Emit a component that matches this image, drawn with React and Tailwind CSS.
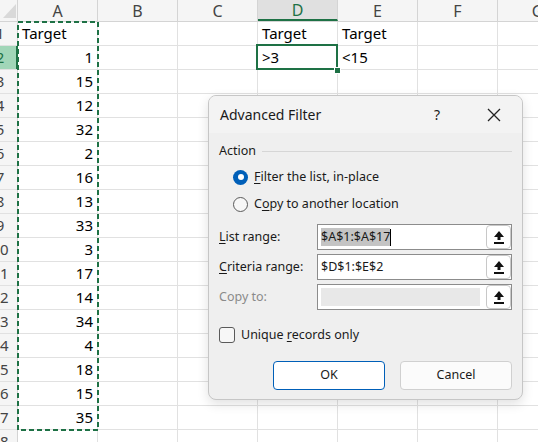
import React from "react";

const cols = ["A", "B", "C", "D", "E", "F", "G"];
const values = [1, 15, 12, 32, 2, 16, 13, 33, 3, 17, 14, 34, 4, 18, 15, 35];

function UploadIcon() {
  return (
    <svg width="12" height="15" viewBox="0 0 12 15">
      <path d="M6 1 L11 7 L7.5 7 L7.5 10 L4.5 10 L4.5 7 L1 7 Z" fill="#111" />
      <rect x="1" y="12" width="10" height="2" fill="#111" />
    </svg>
  );
}

function RangeField({ label, accel, rest, value, selected, disabled }) {
  return (
    <div className="flex items-center h-[26px]">
      <div className={`w-[98px] text-[12.5px] ${disabled ? "text-[#8a8a8a]" : "text-[#1a1a1a]"}`}>
        {accel && <span className="underline underline-offset-2">{accel}</span>}
        {rest}
      </div>
      <div className="flex-1 h-[26px] flex items-center border border-[#8c8c8c] bg-white">
        {disabled ? (
          <div className="flex-1 h-[18px] ml-[3px] mr-[6px] bg-[#e8e8e8]" />
        ) : (
          <div className="flex-1 pl-[3px] text-[12.5px] text-[#1a1a1a] flex items-center">
            <span className={selected ? "bg-[#c4c4c4]" : ""}>{value}</span>
            {selected && <span className="w-px h-[17px] bg-black" />}
          </div>
        )}
        <div className="w-[25px] h-[24px] flex items-center justify-center bg-white border border-[#c8c8c8] rounded-[4px]">
          <UploadIcon />
        </div>
      </div>
    </div>
  );
}

export default function App() {
  return (
    <div className="relative w-[538px] h-[442px] overflow-hidden bg-white" style={{ fontFamily: "'Noto Sans', 'Open Sans', sans-serif" }}>
      {/* Column headers */}
      <div className="flex h-[22px] border-b border-[#d4d4d4] bg-[#f5f5f5]">
        <div className="w-[18px] shrink-0 border-r border-[#d4d4d4] relative">
          <svg width="18" height="21" className="absolute left-0 top-0">
            <path d="M3 18 L16 18 L16 4 Z" fill="#d9d9d9" />
          </svg>
        </div>
        {cols.map((c) => (
          <div
            key={c}
            className={`w-[80px] shrink-0 flex items-center justify-center text-[16px] border-r border-[#d4d4d4] ${
              c === "D" ? "bg-[#e0e0e0] text-[#1e7145] border-b-2 border-b-[#1e7145]" : "text-[#444]"
            }`}
          >
            {c}
          </div>
        ))}
      </div>

      {/* Rows */}
      {Array.from({ length: 18 }).map((_, i) => {
        const r = i + 1;
        const sel = r === 2;
        return (
          <div key={r} className="flex h-[24px] border-b border-[#e1e1e1]">
            <div
              className={`w-[18px] shrink-0 overflow-hidden flex items-center text-[15px] border-r ${
                sel ? "bg-[#a1d6b8] text-[#1e7145] border-r-2 border-r-[#1e7145]" : "bg-[#f5f5f5] text-[#444] border-[#d4d4d4]"
              }`}
            >
              <div className="w-[34px] shrink-0 -ml-[17px] text-center">{r}</div>
            </div>
            {cols.map((c) => {
              let txt = "";
              let right = false;
              if (c === "A") {
                if (r === 1) txt = "Target";
                else if (r <= 17) {
                  txt = values[r - 2];
                  right = true;
                }
              }
              if (c === "D" && r === 1) txt = "Target";
              if (c === "E" && r === 1) txt = "Target";
              if (c === "D" && r === 2) txt = ">3";
              if (c === "E" && r === 2) txt = "<15";
              return (
                <div
                  key={c}
                  className={`w-[80px] shrink-0 flex items-center text-[15px] text-black border-r border-[#e1e1e1] px-[4px] ${
                    right ? "justify-end" : ""
                  }`}
                >
                  {txt}
                </div>
              );
            })}
          </div>
        );
      })}

      {/* Copy marquee around A1:A17 */}
      <svg className="absolute left-[17px] top-[21px]" width="82" height="410">
        <rect x="1" y="1" width="80" height="408" fill="none" stroke="#1e7145" strokeWidth="2" strokeDasharray="5 3" />
      </svg>

      {/* Active cell D2 */}
      <div className="absolute left-[256px] top-[44px] w-[82px] h-[26px] border-2 border-[#1e7145]" />
      <div className="absolute left-[334px] top-[67px] w-[5px] h-[5px] bg-[#1e7145] border border-white box-content" />

      {/* Advanced Filter dialog */}
      <div className="absolute left-[208px] top-[95px] w-[315px] h-[305px] rounded-[8px] border border-[#c6c6c6] bg-[#efefef] shadow-[0_4px_12px_rgba(0,0,0,0.12)] overflow-hidden text-[#1a1a1a]">
        <div className="h-[37px] bg-[#f3f3f3] flex items-center pl-[11px] pr-[21px]">
          <span className="text-[14px]">Advanced Filter</span>
          <span className="ml-auto text-[14px]">?</span>
          <svg className="ml-[47px]" width="14" height="14" viewBox="0 0 14 14">
            <path d="M1 1 L13 13 M13 1 L1 13" stroke="#222" strokeWidth="1.3" />
          </svg>
        </div>

        <div className="px-[10px]">
          <div className="mt-[9px] h-[18px] flex items-center gap-[6px]">
            <span className="text-[12.5px]">Action</span>
            <div className="flex-1 h-px bg-[#d6d6d6]" />
          </div>

          <div className="mt-[6px] h-[22px] flex items-center pl-[14px] gap-[6px]">
            <div className="w-[15px] h-[15px] rounded-full bg-[#005fb8] flex items-center justify-center">
              <div className="w-[6px] h-[6px] rounded-full bg-white" />
            </div>
            <span className="text-[12.5px]">
              <span className="underline underline-offset-2">F</span>ilter the list, in-place
            </span>
          </div>

          <div className="mt-[5px] h-[22px] flex items-center pl-[14px] gap-[6px]">
            <div className="w-[15px] h-[15px] rounded-full border border-[#5a5a5a] bg-[#f7f7f7]" />
            <span className="text-[12.5px]">
              C<span className="underline underline-offset-2">o</span>py to another location
            </span>
          </div>

          <div className="mt-[9px]">
            <RangeField accel="L" rest="ist range:" value="$A$1:$A$17" selected />
          </div>
          <div className="mt-[4px]">
            <RangeField accel="C" rest="riteria range:" value="$D$1:$E$2" />
          </div>
          <div className="mt-[4px]">
            <RangeField rest="Copy to:" disabled />
          </div>

          <div className="mt-[15px] h-[20px] flex items-center gap-[6px]">
            <div className="w-[16px] h-[16px] rounded-[3px] border border-[#5a5a5a] bg-[#f7f7f7]" />
            <span className="text-[12.5px]">
              Unique <span className="underline underline-offset-2">r</span>ecords only
            </span>
          </div>

          <div className="mt-[16px] flex justify-end gap-[15px]">
            <button className="w-[112px] h-[29px] rounded-[4px] border border-[#005fb8] bg-white text-[12.5px]">OK</button>
            <button className="w-[112px] h-[29px] rounded-[4px] border border-[#d0d0d0] bg-[#fbfbfb] text-[12.5px]">Cancel</button>
          </div>
        </div>
      </div>
    </div>
  );
}
